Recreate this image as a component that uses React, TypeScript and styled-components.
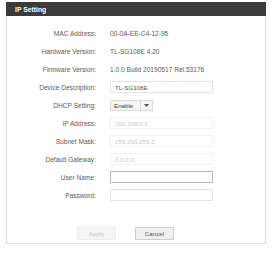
import styled, { createGlobalStyle } from "styled-components";

const GlobalStyle = createGlobalStyle`
  body {
    margin: 0;
    background: #ffffff;
    font-family: "Liberation Sans", Arial, sans-serif;
  }
`;

const Panel = styled.div`
  margin: 2px 0 0 6px;
  width: 260px;
  height: 242px;
  box-sizing: border-box;
  border: 1px solid #dcdcdc;
  border-top: none;
  display: flex;
  flex-direction: column;
`;

const Header = styled.div`
  height: 14px;
  background: #3b3b3b;
  color: #ffffff;
  font-size: 6.8px;
  font-weight: bold;
  display: flex;
  align-items: center;
  padding-left: 9px;
  margin: 0 -1px;
`;

const Form = styled.div`
  display: grid;
  grid-template-columns: 89px 103px;
  grid-auto-rows: 18px;
  column-gap: 14px;
  padding-top: 8px;
`;

const Label = styled.div`
  font-size: 6.6px;
  color: #5a5a5a;
  text-align: right;
  align-self: center;
`;

const Value = styled.div`
  font-size: 6.6px;
  color: #5a5a5a;
  align-self: center;
  white-space: nowrap;
`;

const Input = styled.div<{ $faded?: boolean; $dark?: boolean }>`
  height: 12px;
  box-sizing: border-box;
  align-self: center;
  border: 1px solid
    ${(p) => (p.$dark ? "#b8b8b8" : p.$faded ? "#f0f0f0" : "#e2e2e2")};
  font-size: 6.2px;
  color: ${(p) => (p.$faded ? "#c8c8c8" : "#555")};
  display: flex;
  align-items: center;
  padding-left: 4px;
`;

const Select = styled.div`
  width: 43px;
  height: 11px;
  box-sizing: border-box;
  align-self: center;
  border: 1px solid #dadada;
  background: #f4f4f4;
  display: flex;
  font-size: 6.2px;
  color: #444;
`;

const SelectText = styled.div`
  flex: 1;
  display: flex;
  align-items: center;
  padding-left: 3px;
  border-right: 1px solid #d8d8d8;
`;

const SelectArrow = styled.div`
  width: 11px;
  display: flex;
  align-items: center;
  justify-content: center;
`;

const Buttons = styled.div`
  display: flex;
  gap: 19px;
  margin: 23px 0 0 70px;
`;

const Button = styled.div<{ $disabled?: boolean }>`
  width: 39px;
  height: 13px;
  box-sizing: border-box;
  border: 1px solid ${(p) => (p.$disabled ? "#ececec" : "#cfcfcf")};
  background: ${(p) => (p.$disabled ? "#f6f6f6" : "#f0f0f0")};
  color: ${(p) => (p.$disabled ? "#c4c4c4" : "#555")};
  font-size: 6.2px;
  display: flex;
  align-items: center;
  justify-content: center;
`;

export default function App() {
  return (
    <>
      <GlobalStyle />
      <Panel>
        <Header>IP Setting</Header>
        <Form>
          <Label>MAC Address:</Label>
          <Value>00-0A-EE-C4-12-95</Value>
          <Label>Hardware Version:</Label>
          <Value>TL-SG108E 4.20</Value>
          <Label>Firmware Version:</Label>
          <Value>1.0.0 Build 20190517 Rel.53176</Value>
          <Label>Device Description:</Label>
          <Input>TL-SG108E</Input>
          <Label>DHCP Setting:</Label>
          <Select>
            <SelectText>Enable</SelectText>
            <SelectArrow>
              <svg width="5" height="3" viewBox="0 0 5 3">
                <path d="M0 0 L5 0 L2.5 3 Z" fill="#555" />
              </svg>
            </SelectArrow>
          </Select>
          <Label>IP Address:</Label>
          <Input $faded>192.168.0.1</Input>
          <Label>Subnet Mask:</Label>
          <Input $faded>255.255.255.0</Input>
          <Label>Default Gateway:</Label>
          <Input $faded>0.0.0.0</Input>
          <Label>User Name:</Label>
          <Input $dark />
          <Label>Password:</Label>
          <Input />
        </Form>
        <Buttons>
          <Button $disabled>Apply</Button>
          <Button>Cancel</Button>
        </Buttons>
      </Panel>
    </>
  );
}
